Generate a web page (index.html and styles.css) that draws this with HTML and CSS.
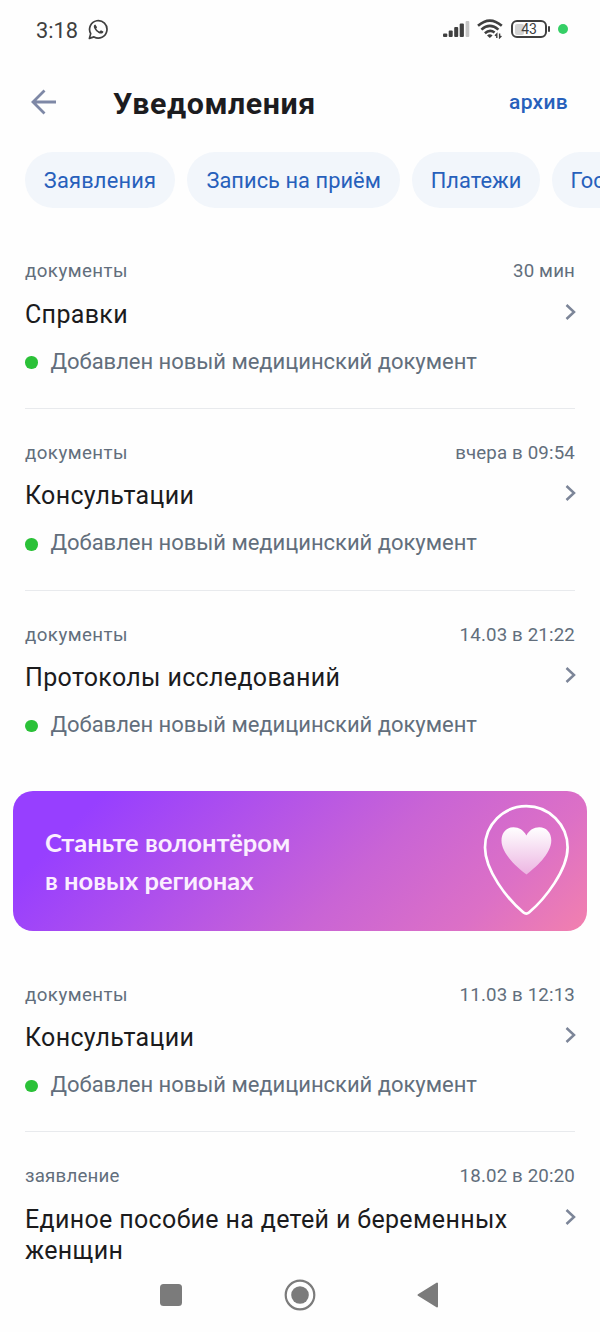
FILE: index.html
```html
<!DOCTYPE html>
<html lang="ru">
<head>
<meta charset="utf-8">
<title>Уведомления</title>
<link rel="stylesheet" href="styles.css">
</head>
<body>
<div class="screen">
  <div class="status">
    <span class="time">3:18</span>
    <svg class="whatsapp" width="21" height="21" viewBox="0 0 21 21" fill="none"><path d="M1.4 19.4l1.3-4.8A8.7 8.7 0 1 1 6 17.9z" stroke="#3f3f3f" stroke-width="1.7" stroke-linejoin="round"/><path d="M7.3 5.4c-.4-.1-1.5.7-1.5 2 0 3 4.400 7 7 7.200 1.500.1 2.700-.9 2.600-2.100l-2.500-1.300-1.300 1.400c-1.600-.6-2.700-1.700-3.400-3.100l.9-1.300z" fill="#3f3f3f"/></svg>
    <div class="indicators">
      <svg width="27" height="18" viewBox="0 0 27 18"><g fill="#3f3f3f"><rect x="0" y="13.500" width="4.300" height="3.500" rx="1"/><rect x="5.700" y="10.500" width="4" height="6.500" rx="1"/><rect x="11.200" y="7" width="4" height="10" rx="1"/><rect x="16.700" y="3.500" width="4.200" height="13.500" rx="1"/></g><rect x="22.600" y="1" width="3.700" height="16" rx="1" fill="#c4c4c4"/></svg>
      <svg class="wifi" width="26" height="20" viewBox="0 0 26 20" fill="none"><g stroke="#3f3f3f" stroke-width="2.600"><path d="M1 6.800Q12.800-3.600 24.800 6.800"/><path d="M4.400 10.600Q12.800 3 21.400 10.600"/><path d="M7.900 14.200Q12.800 9.800 17.600 13.500"/></g><path d="M10 16.500q2.800-2.400 5.600 0l-2.800 2.600z" fill="#3f3f3f"/><path d="M19.800 19v-4l-1.800 1.800M22.600 14.500v4.200l1.800-1.800" stroke="#3f3f3f" stroke-width="1.400"/></svg>
      <div class="battery"><span class="charge"></span><span class="percent">43</span></div>
      <span class="nub"></span>
      <span class="active-dot"></span>
    </div>
  </div>
  <header class="header">
    <svg class="back" width="26" height="26" viewBox="0 0 26 26" fill="none" stroke="#7e88a6" stroke-width="2.800"><path d="M25 13H2M13.500 1.500L2 13l11.500 11.500"/></svg>
    <h1 class="heading">Уведомления</h1>
    <a class="archive">архив</a>
  </header>
  <nav class="chips">
    <span class="chip chip-a">Заявления</span><span class="chip chip-b">Запись на приём</span><span class="chip chip-c">Платежи</span><span class="chip chip-d">Гос</span>
  </nav>
  <main>
    <article class="item">
      <div class="meta"><span class="kind">документы</span><span>30 мин</span></div>
      <div class="row"><h2 class="title">Справки</h2><svg class="chevron" width="12" height="18" viewBox="0 0 12 18"><path d="M1.500 2l7.500 7-7.500 7"/></svg></div>
      <p class="note">Добавлен новый медицинский документ</p>
    </article>
    <article class="item">
      <div class="meta"><span class="kind">документы</span><span>вчера в 09:54</span></div>
      <div class="row"><h2 class="title">Консультации</h2><svg class="chevron" width="12" height="18" viewBox="0 0 12 18"><path d="M1.500 2l7.500 7-7.500 7"/></svg></div>
      <p class="note">Добавлен новый медицинский документ</p>
    </article>
    <article class="item last">
      <div class="meta"><span class="kind">документы</span><span>14.03 в 21:22</span></div>
      <div class="row"><h2 class="title">Протоколы исследований</h2><svg class="chevron" width="12" height="18" viewBox="0 0 12 18"><path d="M1.500 2l7.500 7-7.500 7"/></svg></div>
      <p class="note">Добавлен новый медицинский документ</p>
    </article>
    <section class="banner">
      <p class="slogan">Станьте волонтёром<br>в новых регионах</p>
      <svg class="pin" width="88" height="114" viewBox="0 0 88 114">
        <defs><linearGradient id="heart" x1="0" y1="0" x2="0" y2="1"><stop offset="0" stop-color="#fff"/><stop offset="1" stop-color="#ecb5e2"/></linearGradient></defs>
        <path d="M41.500 108.500C25 95 3 66 3 43.500a41.300 41.300 0 0 1 82.600 0C85.600 66 63 95 47 108.500q-2.700 2.200-5.500 0z" fill="none" stroke="#fff" stroke-width="2.700"/>
        <path d="M44.500 70.500C36 64 19.500 50 19.500 36.500c0-8 5-13.300 12-13.300 5.500 0 10 2.800 12.900 8.300 2.900-5.500 7.400-8.300 12.900-8.300 7 0 12 5.300 12 13.300C69.300 50 53 64 44.500 70.500z" fill="url(#heart)"/>
      </svg>
    </section>
    <article class="item">
      <div class="meta"><span class="kind">документы</span><span>11.03 в 12:13</span></div>
      <div class="row"><h2 class="title">Консультации</h2><svg class="chevron" width="12" height="18" viewBox="0 0 12 18"><path d="M1.500 2l7.500 7-7.500 7"/></svg></div>
      <p class="note">Добавлен новый медицинский документ</p>
    </article>
    <article class="item cut">
      <div class="meta"><span class="kind tight">заявление</span><span>18.02 в 20:20</span></div>
      <div class="row"><h2 class="title">Единое пособие на детей и беременных женщин</h2><svg class="chevron" width="12" height="18" viewBox="0 0 12 18"><path d="M1.500 2l7.500 7-7.500 7"/></svg></div>
    </article>
  </main>
  <footer class="navbar">
    <svg width="24" height="24" viewBox="0 0 24 24"><rect x="1" y="1" width="22" height="22" rx="3.500" fill="#7b7b7b"/></svg>
    <svg width="32" height="32" viewBox="0 0 32 32"><circle cx="16" cy="16" r="14.300" fill="none" stroke="#7b7b7b" stroke-width="2.200"/><circle cx="16" cy="16" r="8.800" fill="#7b7b7b"/></svg>
    <svg width="24" height="28" viewBox="0 0 24 28"><path d="M2.500 14L21 2.500v23z" fill="#7b7b7b" stroke="#7b7b7b" stroke-width="2" stroke-linejoin="round"/></svg>
  </footer>
</div>
</body>
</html>
```
FILE: styles.css
```css
* { box-sizing: border-box; }
body, h1, h2, p { margin: 0; }
body { background: #fefefe; font-family: Roboto, "Noto Sans", sans-serif; }
.screen { width: 600px; height: 1332px; overflow: hidden; display: flex; flex-direction: column; }
.status { height: 58px; flex: none; display: flex; align-items: center; padding: 0 32px 0 36px; color: #3f3f3f; }
.time { font-size: 21.800px; letter-spacing: 0; line-height: 26px; margin-top: 3px; }
.whatsapp { margin-left: 10px; }
.indicators { margin-left: auto; display: flex; align-items: center; }
.wifi { margin-left: 7px; }
.battery { position: relative; width: 36px; height: 18px; margin-left: 8px; border: 2px solid #3f3f3f; border-radius: 6px; display: flex; align-items: center; justify-content: center; }
.charge { position: absolute; left: 1.500px; top: 1.500px; bottom: 1.500px; width: 9px; border-radius: 2px; background: #d2d2d2; }
.percent { position: relative; font-size: 14px; line-height: 14px; }
.nub { width: 2px; height: 6px; background: #3f3f3f; margin-left: 1px; border-radius: 1px; }
.active-dot { width: 10px; height: 10px; border-radius: 50%; background: #35cf66; margin-left: 8px; }
.header { height: 86px; flex: none; display: flex; align-items: center; padding: 1px 32px 0 31px; }
.heading { margin-left: 56px; font-size: 30.400px; font-weight: 700; line-height: 36px; letter-spacing: .560px; color: #1c1c1f; padding-top: 4px; }
.archive { margin-left: auto; font-size: 21px; font-weight: 500; color: #2760bb; letter-spacing: .3px; line-height: 26px; }
.chips { display: flex; flex: none; gap: 12.200px; margin: 7.500px 0 0 25px; height: 56.500px; }
.chip { flex: none; height: 56.500px; border-radius: 28.300px; background: #f2f6fb; color: #2760bb; font-size: 21.800px; line-height: 58px; text-align: center; letter-spacing: .06px; white-space: nowrap; }
.chip-a { width: 150px; letter-spacing: .2px; }
.chip-b { width: 213px; }
.chip-c { width: 127.500px; }
.chip-d { width: 132px; padding-left: 18.500px; text-align: left; }
main { flex: none; margin-top: 19.300px; height: 1039.200px; overflow: hidden; }
.item { height: 181.670px; margin: 0 25px; padding-top: 31.200px; border-bottom: 1.500px solid #e8eaed; }
.item.last, .item.cut { border-bottom-color: transparent; }
.meta { display: flex; justify-content: space-between; font-size: 18.700px; line-height: 26px; color: #626e7c; letter-spacing: .15px; }
.kind { letter-spacing: .45px; }
.kind.tight { letter-spacing: .2px; }
.row { display: flex; justify-content: space-between; align-items: flex-start; margin-top: 14.200px; }
.title { width: 500px; font-size: 25px; font-weight: 400; line-height: 31px; letter-spacing: .34px; color: #1b1b1d; }
.chevron { margin: 4px -1.500px 0 0; fill: none; stroke: #7c8598; stroke-width: 2.500; }
.note { display: flex; align-items: center; gap: 13px; margin-top: 18px; font-size: 22px; line-height: 28px; color: #626e7c; letter-spacing: -.03px; white-space: nowrap; }
.note::before { content: ""; width: 12.500px; height: 12.500px; border-radius: 50%; background: #2bc138; margin-top: 2px; }
.banner { display: flex; justify-content: space-between; align-items: center; height: 140.500px; margin: 18.500px 13px 19.300px; padding: 0 17px 0 32px; border-radius: 20px; background: linear-gradient(135deg, #973fff 13%, #b152ea 37%, #c964d5 60%, #dc70c6 82%, #f280ae 100%); }
.slogan { font-family: Lato, sans-serif; font-size: 25.500px; font-weight: 700; line-height: 38.500px; color: #fbeeff; white-space: nowrap; }
.navbar { flex: none; height: 65px; display: flex; align-items: center; justify-content: space-between; padding: 0 160px 8px 159px; }
```
